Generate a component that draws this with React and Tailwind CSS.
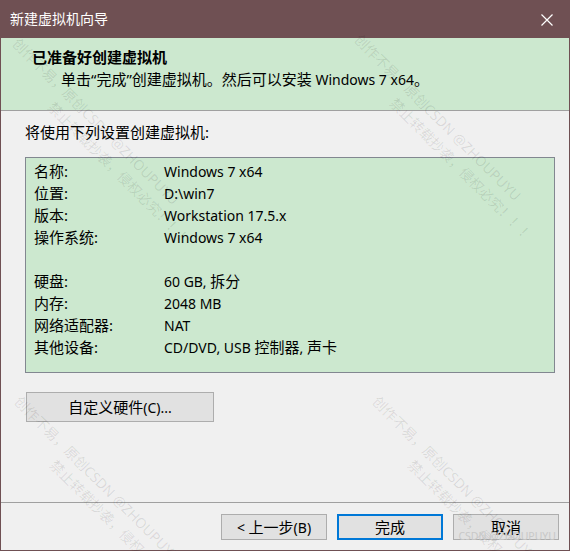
import React from 'react';

const rows = [
  ['名称:', 'Windows 7 x64'],
  ['位置:', 'D:\\win7'],
  ['版本:', 'Workstation 17.5.x'],
  ['操作系统:', 'Windows 7 x64'],
  ['', ''],
  ['硬盘:', '60 GB, 拆分'],
  ['内存:', '2048 MB'],
  ['网络适配器:', 'NAT'],
  ['其他设备:', 'CD/DVD, USB 控制器, 声卡'],
];

// diagonal CSDN watermark tiles
const marks = [
  { left: 22, top: 34 },
  { left: 364, top: 30 },
  { left: 24, top: 392 },
  { left: 382, top: 392 },
];

// latin runs a touch smaller so they sit like Segoe UI next to the CJK glyphs
const Mixed = ({ text }) =>
  text.split(/([\u0020-\u007e]+)/).map((part, i) =>
    /[\u0020-\u007e]/.test(part) && part.trim() ? (
      <span key={i} className="text-[14px]">{part}</span>
    ) : (
      <span key={i}>{part}</span>
    )
  );

const Watermark = ({ left, top }) => (
  <div
    className="absolute pointer-events-none origin-top-left rotate-45 whitespace-nowrap text-[14px] leading-[20px] text-black/10"
    style={{ left, top }}
  >
    <div>创作不易，原创CSDN @ZHOUPUYU</div>
    <div className="pl-[70px]">禁止转载抄袭，侵权必究！！！</div>
  </div>
);

const Button = ({ children, primary }) => (
  <button
    className={`h-[26px] w-[106px] bg-[#e1e1e1] text-[15px] leading-none text-black ${
      primary ? 'border-2 border-[#0078d7]' : 'border border-[#adadad]'
    }`}
  >
    {children}
  </button>
);

export default function App() {
  return (
    <div className="relative w-[570px] h-[551px] overflow-hidden bg-[#6f5053] px-px pb-px flex flex-col font-['Noto_Sans','Noto_Sans_CJK_SC',sans-serif] text-black">
      {/* title bar */}
      <div className="h-[38px] shrink-0 flex items-center justify-between pl-[9px] pr-[16px]">
        <span className="text-[14px] text-white leading-none">新建虚拟机向导</span>
        <svg width="12" height="12" viewBox="0 0 12 12" className="mt-px">
          <path d="M0.5 0.5 L11.5 11.5 M11.5 0.5 L0.5 11.5" stroke="#ffffff" strokeWidth="1.2" fill="none" />
        </svg>
      </div>

      <div className="flex-1 flex flex-col bg-[#f0f0f0]">
        {/* header */}
        <div className="h-[73px] shrink-0 bg-[#cce8cf] border-b border-[#a0a0a0] pt-[8px]">
          <div className="pl-[31px] text-[15px] font-bold leading-[22px]">已准备好创建虚拟机</div>
          <div className="pl-[60px] text-[15px] leading-[22px]">
            <Mixed text="单击“完成”创建虚拟机。然后可以安装 Windows 7 x64。" />
          </div>
        </div>

        {/* body */}
        <div className="flex-1 pt-[10px]">
          <div className="pl-[24px] text-[15px] leading-[22px]">将使用下列设置创建虚拟机:</div>
          <div className="ml-[24px] mt-[14px] w-[530px] h-[216px] bg-[#cce8cf] border border-[#828790] pt-[2px] pl-[8px]">
            {rows.map(([k, v], i) => (
              <div key={i} className="grid grid-cols-[130px_1fr] h-[22px] text-[15px] leading-[22px]">
                <span>{k}</span>
                <span>
                  <Mixed text={v} />
                </span>
              </div>
            ))}
          </div>
          <button className="ml-[25px] mt-[19px] w-[188px] h-[30px] bg-[#e1e1e1] border border-[#adadad] text-[15px] leading-none">
            <Mixed text="自定义硬件(C)..." />
          </button>
        </div>

        {/* footer */}
        <div className="h-[48px] shrink-0 border-t border-[#a0a0a0] pt-[11px] pr-[10px] flex justify-end gap-[10px]">
          <Button>
            <Mixed text="< 上一步(B)" />
          </Button>
          <Button primary>完成</Button>
          <Button>取消</Button>
        </div>
      </div>

      {marks.map((m, i) => (
        <Watermark key={i} {...m} />
      ))}
      <div className="absolute right-[14px] bottom-[10px] text-[10.5px] leading-none text-[#c8c8c8] pointer-events-none">
        CSDN @ZHOUPUYU
      </div>
    </div>
  );
}
